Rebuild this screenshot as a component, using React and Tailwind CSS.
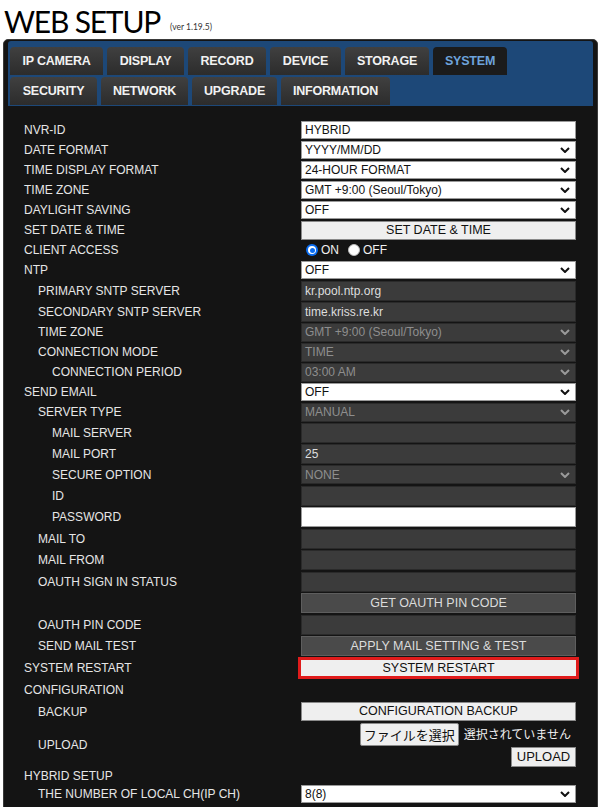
import React from 'react';

const Chevron = ({ dim }) => (
  <svg width="10" height="6" viewBox="0 0 10 6" className="absolute right-[5px] top-1/2 -translate-y-1/2">
    <path d="M1 1 L5 5 L9 1" fill="none" stroke={dim ? '#9a9a9a' : '#111'} strokeWidth="2" />
  </svg>
);

const WhiteInput = ({ value = '', tall }) => (
  <div className={`${tall ? 'h-[20px]' : 'h-[18px]'} w-[275px] bg-white border border-[#9a9a9a] text-[#111] px-[3px] flex items-center leading-none`}>
    {value}
  </div>
);

const WhiteSelect = ({ value }) => (
  <div className="relative h-[18px] w-[275px] bg-white border border-[#9a9a9a] text-[#111] px-[3px] flex items-center leading-none">
    {value}
    <Chevron />
  </div>
);

const DarkInput = ({ value = '' }) => (
  <div className="h-[20px] w-[275px] bg-[#3b3b3b] border border-[#2a2a2a] text-[#dedede] px-[3px] flex items-center leading-none">
    {value}
  </div>
);

const DarkSelect = ({ value }) => (
  <div className="relative h-[19px] w-[275px] bg-[#3b3b3b] border border-[#2a2a2a] text-[#8e8e8e] px-[3px] flex items-center leading-none">
    {value}
    <Chevron dim />
  </div>
);

const LightButton = ({ children }) => (
  <div className="h-[19px] w-[275px] bg-[#efefef] border border-[#8a8a8a] text-[#111] text-[12.5px] flex items-center justify-center leading-none">
    {children}
  </div>
);

const DarkButton = ({ children }) => (
  <div className="h-[20px] w-[275px] bg-[#4a4a4a] border border-[#5e5e5e] text-[#dcdcdc] text-[12.5px] flex items-center justify-center leading-none">
    {children}
  </div>
);

function Row({ label, level = 0, h, children }) {
  const indent = level === 2 ? 'pl-[28px]' : level === 1 ? 'pl-[14px]' : 'pl-0';
  return (
    <div className={`flex items-center ${h}`}>
      <div className={`w-[277px] shrink-0 text-[#e6e6e6] ${indent}`}>{label}</div>
      <div>{children}</div>
    </div>
  );
}

const tabsTop = [
  { name: 'IP CAMERA', w: 'w-[93px]' },
  { name: 'DISPLAY', w: 'w-[77px]' },
  { name: 'RECORD', w: 'w-[78px]' },
  { name: 'DEVICE', w: 'w-[71px]' },
  { name: 'STORAGE', w: 'w-[84px]' },
  { name: 'SYSTEM', w: 'w-[74px]', active: true },
];

const tabsBottom = [
  { name: 'SECURITY', w: 'w-[87px]' },
  { name: 'NETWORK', w: 'w-[87px]' },
  { name: 'UPGRADE', w: 'w-[85px]' },
  { name: 'INFORMATION', w: 'w-[109px]' },
];

function Tab({ tab }) {
  return (
    <div
      className={`${tab.w} h-full rounded-t-[4px] flex items-center justify-center font-bold text-[12.5px] tracking-[-0.2px] ${
        tab.active ? 'bg-[#1b1b1b] text-[#6ea3dc]' : 'bg-gradient-to-b from-[#404040] to-[#2c2c2c] text-[#f2f2f2]'
      }`}
    >
      {tab.name}
    </div>
  );
}

export default function App() {
  return (
    <div className="w-[600px] h-[807px] overflow-hidden bg-white font-['Liberation_Sans',Arial,sans-serif] text-[12px]">
      <div className="h-[38px] flex items-end pl-[4px]">
        <h1 className="font-['Lato',sans-serif] text-[30px] leading-[34px] tracking-[-1.2px] text-black">WEB SETUP</h1>
        <span className="ml-[10px] mb-[4px] text-[8.5px] text-[#333] font-['Lato',sans-serif]">(ver 1.19.5)</span>
      </div>

      <div className="ml-[3px] mt-[1px] w-[595px] bg-[#141414] border border-[#3a3a3a] rounded-t-[5px] pt-[1px] px-[4px] pb-[40px]">
        <div className="bg-[#1d4878] pt-[6px] pl-[2px] pb-[1px] rounded-t-[3px]">
          <div className="flex gap-[4px] h-[28px]">
            {tabsTop.map((t) => <Tab key={t.name} tab={t} />)}
          </div>
          <div className="flex gap-[4px] h-[28px] mt-[2px]">
            {tabsBottom.map((t) => <Tab key={t.name} tab={t} />)}
          </div>
        </div>

        <div className="pl-[16px] pt-[14px]">
          <Row label="NVR-ID" h="h-[20px]"><WhiteInput value="HYBRID" /></Row>
          <Row label="DATE FORMAT" h="h-[20px]"><WhiteSelect value="YYYY/MM/DD" /></Row>
          <Row label="TIME DISPLAY FORMAT" h="h-[20px]"><WhiteSelect value="24-HOUR FORMAT" /></Row>
          <Row label="TIME ZONE" h="h-[20px]"><WhiteSelect value="GMT +9:00 (Seoul/Tokyo)" /></Row>
          <Row label="DAYLIGHT SAVING" h="h-[20px]"><WhiteSelect value="OFF" /></Row>
          <Row label="SET DATE & TIME" h="h-[20px]"><LightButton>SET DATE &amp; TIME</LightButton></Row>
          <Row label="CLIENT ACCESS" h="h-[20px]">
            <div className="flex items-center pl-[5px] text-[#f0f0f0] text-[12px]">
              <span className="w-[12px] h-[12px] rounded-full bg-[#0a6cf0] flex items-center justify-center">
                <span className="w-[8px] h-[8px] rounded-full bg-white flex items-center justify-center">
                  <span className="w-[5px] h-[5px] rounded-full bg-[#0a6cf0]" />
                </span>
              </span>
              <span className="ml-[3px]">ON</span>
              <span className="ml-[9px] w-[12px] h-[12px] rounded-full bg-white border border-[#bbb]" />
              <span className="ml-[3px]">OFF</span>
            </div>
          </Row>
          <Row label="NTP" h="h-[20px]"><WhiteSelect value="OFF" /></Row>
          <Row label="PRIMARY SNTP SERVER" level={1} h="h-[21px]"><DarkInput value="kr.pool.ntp.org" /></Row>
          <Row label="SECONDARY SNTP SERVER" level={1} h="h-[21px]"><DarkInput value="time.kriss.re.kr" /></Row>
          <Row label="TIME ZONE" level={1} h="h-[20px]"><DarkSelect value="GMT +9:00 (Seoul/Tokyo)" /></Row>
          <Row label="CONNECTION MODE" level={1} h="h-[20px]"><DarkSelect value="TIME" /></Row>
          <Row label="CONNECTION PERIOD" level={2} h="h-[20px]"><DarkSelect value="03:00 AM" /></Row>
          <Row label="SEND EMAIL" h="h-[20px]"><WhiteSelect value="OFF" /></Row>
          <Row label="SERVER TYPE" level={1} h="h-[20px]"><DarkSelect value="MANUAL" /></Row>
          <Row label="MAIL SERVER" level={2} h="h-[21px]"><DarkInput /></Row>
          <Row label="MAIL PORT" level={2} h="h-[21px]"><DarkInput value="25" /></Row>
          <Row label="SECURE OPTION" level={2} h="h-[21px]"><DarkSelect value="NONE" /></Row>
          <Row label="ID" level={2} h="h-[21px]"><DarkInput /></Row>
          <Row label="PASSWORD" level={2} h="h-[22px]"><WhiteInput tall /></Row>
          <Row label="MAIL TO" level={1} h="h-[21px]"><DarkInput /></Row>
          <Row label="MAIL FROM" level={1} h="h-[22px]"><DarkInput /></Row>
          <Row label="OAUTH SIGN IN STATUS" level={1} h="h-[21px]"><DarkInput /></Row>
          <Row label="" level={1} h="h-[22px]"><DarkButton>GET OAUTH PIN CODE</DarkButton></Row>
          <Row label="OAUTH PIN CODE" level={1} h="h-[21px]"><DarkInput /></Row>
          <Row label="SEND MAIL TEST" level={1} h="h-[22px]"><DarkButton>APPLY MAIL SETTING &amp; TEST</DarkButton></Row>
          <Row label="SYSTEM RESTART" h="h-[22px]">
            <div className="-ml-[3px] border-[3px] border-[#e01b1b] bg-[#efefef] h-[22px] w-[281px] flex items-center justify-center text-[12.5px] text-[#111] leading-none">
              SYSTEM RESTART
            </div>
          </Row>
          <Row label="CONFIGURATION" h="h-[22px]" />
          <Row label="BACKUP" level={1} h="h-[21px]"><LightButton>CONFIGURATION BACKUP</LightButton></Row>
          <Row label="UPLOAD" level={1} h="h-[45px]">
            <div className="w-[275px] flex flex-col items-end">
              <div className="flex items-center">
                <div className="h-[23px] w-[99px] bg-[#efefef] border border-[#8a8a8a] rounded-[2px] flex items-center justify-center text-[13px] text-[#111] font-['Noto_Sans_CJK_JP',sans-serif] leading-none">
                  ファイルを選択
                </div>
                <span className="ml-[5px] mr-[5px] text-[12px] text-[#f0f0f0] font-['Noto_Sans_CJK_JP',sans-serif] leading-none">選択されていません</span>
              </div>
              <div className="mt-[1px] h-[20px] w-[65px] bg-[#efefef] border border-[#8a8a8a] flex items-center justify-center text-[13px] text-[#111] leading-none">
                UPLOAD
              </div>
            </div>
          </Row>
          <Row label="HYBRID SETUP" h="h-[17px]" />
          <Row label="THE NUMBER OF LOCAL CH(IP CH)" level={1} h="h-[19px]"><WhiteSelect value="8(8)" /></Row>
          <Row label="SYSTEM EVENT NOTIFICATION" h="h-[20px]" />
          <Row label="ALARM" level={1} h="h-[20px]"><WhiteSelect value="OFF" /></Row>
        </div>
      </div>
    </div>
  );
}
